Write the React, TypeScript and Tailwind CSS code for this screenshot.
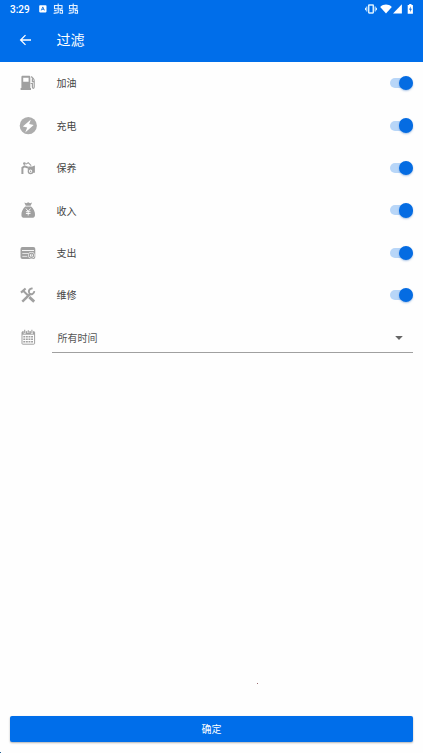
import type { ReactNode } from 'react';

const GRAY = '#a0a0a0';

function FuelIcon() {
  return (
    <svg width="18" height="18" viewBox="0 0 18 18" fill="none">
      <path fillRule="evenodd" fill={GRAY} d="M3.800 1.700h6.200c.8 0 1.300.5 1.300 1.300v11h.7v1.900H1.600V14h.8V3c0-.8.6-1.300 1.400-1.300Zm.4 2v4.100h5.400V3.700Z" />
      <path d="M12.200 2.500l2.200 2.200c.6.6.8 1.200.8 2.200v6.200c0 1.600-1.800 1.600-1.800 0V9.500h-1.800M13.400 4.400v3.300h1.800" stroke={GRAY} strokeWidth="1.200" />
    </svg>
  );
}

function ChargeIcon() {
  return (
    <svg width="18" height="18" viewBox="0 0 18 18">
      <circle cx="9.300" cy="8.700" r="8.600" fill="#adadad" />
      <path d="M11.900 2.500 3.800 9.600l4.400.8-2 5 8.500-7.500-4.500-.8Z" fill="#fff" />
    </svg>
  );
}

function MaintenanceIcon() {
  return (
    <svg width="18" height="18" viewBox="0 0 18 18" fill="none" stroke={GRAY}>
      <circle cx="5.400" cy="4.600" r="1.400" fill={GRAY} stroke="none" />
      <path d="M3.400 15V8.700L5.500 7.300l3.500 1.300" strokeWidth="2" />
      <path d="m7 5.100 2.200-1.400 3 3" strokeWidth="1.100" />
      <path d="M9.500 7.500h3.700l2.700-1v7.200h-2.200V10.500H8.500Z" fill={GRAY} stroke="none" />
      <circle cx="11.600" cy="12.200" r="2.300" fill="#fff" strokeWidth="1.300" />
      <circle cx="11.600" cy="12.200" r=".8" fill={GRAY} stroke="none" />
    </svg>
  );
}

function IncomeIcon() {
  return (
    <svg width="18" height="18" viewBox="0 0 18 18">
      <path fill={GRAY} d="m5.300 1.500 2 .7 1.900-.9 1.900.9 2-.7-1.500 3.300H6.800ZM6.300 5.600h5.800c2.500 2.300 4.200 5.400 3.900 8.600-.2 1.800-1.300 2.600-3 2.600H5.400c-1.800 0-2.900-.8-3-2.600-.2-3.200 1.400-6.300 3.900-8.600Z" />
      <path d="m6.900 7.500 2.300 2.800 2.300-2.800M9.200 10.200v4.300M6.900 10.700h4.600M6.900 12.500h4.600" stroke="#fff" strokeWidth=".9" fill="none" />
    </svg>
  );
}

function ExpenseIcon() {
  return (
    <svg width="18" height="18" viewBox="0 0 18 18">
      <rect x="1.500" y="3" width="14.800" height="12" rx="1.900" fill={GRAY} />
      <path d="M3 6.500h12" stroke="#fff" strokeWidth=".9" />
      <path d="M3.300 9.500h6.200M3.300 12.400h5" stroke="#fff" strokeWidth=".7" />
      <circle cx="12.400" cy="11.300" r="3.200" fill="#fff" />
      <circle cx="12.400" cy="11.300" r="2.100" fill="none" stroke={GRAY} strokeWidth="1.200" />
      <path d="M12.400 10v2.600" stroke={GRAY} strokeWidth=".8" />
    </svg>
  );
}

function RepairIcon() {
  return (
    <svg width="18" height="18" viewBox="0 0 18 18" fill="none" stroke={GRAY}>
      <path d="M11.500 7.700 3.300 15.700" strokeWidth="2.400" />
      <path d="M15.200 5.100a3 3 0 0 1-5.200 2.200M13.600 2.600a3 3 0 0 0-3.400 4.300" strokeWidth="2" />
      <path d="m3.700 4.200 5.100 5" strokeWidth="2" />
      <path d="M2 6.600 6.600 2.500" strokeWidth="2.200" />
      <path d="m10.300 11.100 4.900 4.500" strokeWidth="2.800" />
    </svg>
  );
}

function CalendarIcon() {
  return (
    <svg width="18" height="18" viewBox="0 0 18 18" fill="none" stroke={GRAY}>
      <rect x="3" y="3.700" width="12.600" height="12.500" rx=".8" />
      <path d="M3 5.200h12.600" strokeWidth="3" />
      <path d="M5.700 1.800v4M9.300 2.500v2.500M12.900 1.800v4" stroke="#fff" strokeWidth="2" />
      <path d="M5.700 1.800v3.500M9.300 2.300v2.500M12.900 1.800v3.500" strokeWidth="1.100" />
      <path d="M4.300 8.800h10M4.300 11.300h10M4.300 13.800h10" strokeWidth="1.600" strokeDasharray="1.900 .7" />
    </svg>
  );
}

function BugIcon() {
  return (
    <svg width="11" height="12" viewBox="0 0 11 12" fill="none" stroke="#e4f1ff" strokeWidth="1.100">
      <path d="M1.500 2.500h7.500v3.200h-7.500ZM5.200.6v9.300M.6 10.400l4.600-.8M1.200 7.600h2.500M7.200 5.700v1.700h2.300v2.900H7.200V8.600" />
    </svg>
  );
}

function StatusBar() {
  return (
    <div className="flex h-[18px] items-center pl-[10px] pr-[9px]">
      <span className="w-[28px] font-[Roboto,sans-serif] text-[10px] font-medium leading-[17px] text-white">3:29</span>
      <svg className="ml-px" width="8" height="8" viewBox="0 0 8 8">
        <rect x=".2" y=".2" width="7.300" height="7.200" rx=".8" fill="#fff" />
        <path d="m2.300 5.400 1.500-3.500 1.600 3.500M2.900 4.300h1.900" stroke="#1675df" strokeWidth=".9" fill="none" />
      </svg>
      <div className="ml-[6px] flex gap-[4px]"><BugIcon /><BugIcon /></div>
      <div className="-mt-px ml-auto flex items-center">
        <svg width="12" height="10" viewBox="0 0 12 10" fill="none" stroke="#d9efff">
          <rect x="3.700" y="1" width="4.600" height="8" rx=".4" strokeWidth="1.500" />
          <path d="M1.800 2.500v5M10.200 2.500v5M.5 3.800v2.400M11.500 3.800v2.400" strokeWidth="1" />
        </svg>
        <svg className="ml-[3px]" width="12" height="10" viewBox="0 0 12 10"><path d="M.2 2.900C3.800-.3 8.200-.3 11.800 2.900L6 9.600Z" fill="#fff" /></svg>
        <svg className="ml-px" width="9" height="10" viewBox="0 0 9 10"><path d="M8.900.2v9.400H0Z" fill="#fff" /></svg>
        <svg className="ml-[5px]" width="7" height="10" viewBox="0 0 7 10">
          <path d="M2.200 0h2.300v1h1.400v8.800H.7V1h1.500Z" fill="#fff" />
          <path d="M3.700 2.300 2 5.700h1.200v2.500l1.700-3.500H3.700Z" fill="#1675df" />
        </svg>
      </div>
    </div>
  );
}

function Toggle() {
  return (
    <span className="flex h-[10px] w-[23px] items-center justify-end rounded-full bg-[#b8d6f8]">
      <span className="-mr-[0.500px] size-[14.500px] shrink-0 rounded-full bg-[#056ce2] shadow-[0_1px_2px_rgba(0,80,180,0.35)]" />
    </span>
  );
}

function FilterRow({ icon, label }: { icon: ReactNode; label: string }) {
  return (
    <div className="flex h-[42.400px] items-center pl-[19px] pr-[10.500px]">
      {icon}
      <span className="ml-[19.500px] flex-1 pt-[0.500px] text-[10px] leading-4 text-[#444]">{label}</span>
      <Toggle />
    </div>
  );
}

const filters: { label: string; icon: ReactNode }[] = [
  { label: '加油', icon: <FuelIcon /> },
  { label: '充电', icon: <ChargeIcon /> },
  { label: '保养', icon: <MaintenanceIcon /> },
  { label: '收入', icon: <IncomeIcon /> },
  { label: '支出', icon: <ExpenseIcon /> },
  { label: '维修', icon: <RepairIcon /> },
];

export default function App() {
  return (
    <div className="flex h-[753px] w-[423px] flex-col overflow-hidden bg-[#fefefe] font-['Noto_Sans_CJK_SC',sans-serif]">
      <header className="h-[62px] shrink-0 bg-[#006eea]">
        <StatusBar />
        <div className="flex h-[43px] items-center pl-[19px]">
          <svg width="13" height="12" viewBox="0 0 13 12" fill="none" stroke="#fff" strokeWidth="1.300"><path d="M12 6H1.700M6.500 1.100 1.600 6l4.900 4.900" /></svg>
          <h1 className="-mt-[2px] ml-[24.500px] text-[14px] leading-5 text-white">过滤</h1>
        </div>
      </header>
      <main className="flex-1">
        {filters.map((f) => <FilterRow key={f.label} {...f} />)}
        <div className="flex h-[42px] items-start pl-[19px] pr-[10px]">
          <div className="pt-[12px]"><CalendarIcon /></div>
          <button className="ml-[15px] mt-[6px] flex h-[31px] flex-1 items-center justify-between border-b border-[#a0a0a0] pl-[5.500px] pr-[10px] pt-px">
            <span className="text-[10px] leading-4 text-[#555]">所有时间</span>
            <svg width="8" height="4" viewBox="0 0 8 4"><path d="M.2 0h7.600L4 4Z" fill="#666" /></svg>
          </button>
        </div>
        <div className="ml-[257px] mt-[325px] size-px bg-[#9b6b70]" />
      </main>
      <footer className="h-[37px] shrink-0 px-[10px]">
        <button className="block h-[26px] w-full rounded-[2px] bg-[#006eea] text-[10px] leading-[26px] text-white shadow-[0_1px_2px_rgba(0,0,0,0.3)]">确定</button>
        <div className="-ml-[10px] mt-[10px] size-px bg-[#286498]" />
      </footer>
    </div>
  );
}
